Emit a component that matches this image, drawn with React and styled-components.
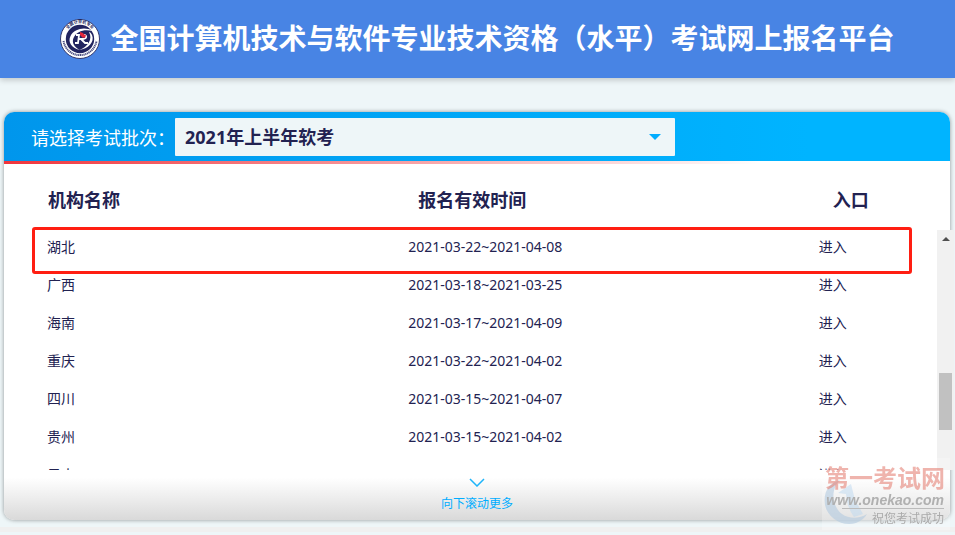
import React, { useState } from "react";
import styled, { createGlobalStyle } from "styled-components";

const GlobalStyle = createGlobalStyle`
  * {
    box-sizing: border-box;
  }
  body {
    margin: 0;
    background-color: #eef6f8;
    color: #222251;
    font-family: "Noto Sans", "Noto Sans CJK SC", sans-serif;
    overflow: hidden;
  }
`;

const Header = styled.header`
  display: flex;
  align-items: center;
  justify-content: center;
  gap: 10px;
  height: 78px;
  background-color: #4884e4;
  box-shadow: 0 2px 6px rgba(0, 0, 0, 0.2);
`;

const Title = styled.h1`
  margin: 0;
  padding-bottom: 4px;
  font-size: 28px;
  line-height: 40px;
  font-weight: bold;
  color: #fff;
  white-space: nowrap;
  font-family: "Noto Sans CJK SC", sans-serif;
`;

const Card = styled.main`
  margin: 34px 5px 0 4px;
  border-radius: 10px;
  background-color: #fff;
  box-shadow: 0 0 4px rgba(0, 0, 0, 0.4);
`;

const BatchBar = styled.div`
  display: flex;
  align-items: center;
  height: 49px;
  padding-left: 27px;
  border-radius: 10px 10px 0 0;
  background: linear-gradient(90deg, #0096ec, #00b4ff 85%);
`;

const BatchLabel = styled.label`
  font-size: 18px;
  color: #fff;
  line-height: 38px;
  padding-top: 2px;
`;

const SelectBox = styled.div`
  display: flex;
  align-items: center;
  flex: 0 1 500px;
  padding-right: 14px;
  border-radius: 1px;
  background-color: #eef6f8;
`;

const BatchSelect = styled.select`
  flex: 1;
  height: 38px;
  padding: 0 10px;
  border: none;
  outline: none;
  appearance: none;
  background: transparent;
  color: #222251;
  font-family: inherit;
  font-size: 18px;
  font-weight: bold;
`;

const Caret = styled.span`
  border: 6px solid transparent;
  border-top-color: #00adff;
  border-bottom: none;
`;

const RedLine = styled.div`
  height: 3px;
  background: linear-gradient(90deg, #f0353c, #fff 80%);
`;

const Table = styled.table`
  width: 100%;
  table-layout: fixed;
  border-collapse: collapse;
`;

const HeadCell = styled.th`
  width: ${(props) => props.$width};
  height: 64px;
  padding: ${(props) => (props.$first ? "8px 0 0 44px" : "8px 0 0")};
  text-align: ${(props) => (props.$first ? "left" : "center")};
  font-size: 18px;
  line-height: 24px;
  font-weight: bold;
  white-space: nowrap;
`;

const ListArea = styled.div`
  position: relative;
  display: flex;
  height: 242px;
  margin-right: -4px;
`;

const ListView = styled.div`
  flex: 1;
  height: 100%;
  overflow: hidden;
`;

const Cell = styled.td`
  width: ${(props) => props.$width};
  height: 38px;
  padding: ${(props) => (props.$first ? "0 0 0 43px" : "0 0 0 3px")};
  font-size: 14px;
  line-height: 20px;
`;

const EnterLink = styled.a`
  color: inherit;
  text-decoration: none;
`;

const RowMark = styled.div`
  position: absolute;
  top: -1px;
  left: 28px;
  right: 42px;
  height: 47px;
  border: 3px solid #ff1e12;
  border-radius: 3px;
  pointer-events: none;
`;

const Track = styled.div`
  display: flex;
  flex-direction: column;
  align-items: center;
  width: 17px;
  margin-top: 2px;
  background-color: #f1f1f1;
`;

const TrackArrow = styled.span`
  margin-top: 7px;
  border: 4px solid transparent;
  border-bottom-color: #505050;
  border-top: none;
`;

const Thumb = styled.span`
  width: 13px;
  height: 57px;
  margin-top: 132px;
  background-color: #c1c1c1;
`;

const MoreButton = styled.button`
  display: flex;
  flex-direction: column;
  align-items: center;
  gap: 8px;
  width: 100%;
  height: 50px;
  padding: 8px 0 0;
  border: none;
  border-radius: 0 0 10px 10px;
  background: linear-gradient(180deg, #fff 15%, #f0f0f0 50%, #d9d9d9);
  color: #00adff;
  font-family: inherit;
  font-size: 12px;
  line-height: 18px;
`;

const BottomLine = styled.div`
  height: 5px;
  margin-top: 7px;
  background-color: #f0f0f0;
`;

const Watermark = styled.aside`
  position: fixed;
  right: 5px;
  bottom: 5px;
  display: flex;
  flex-direction: column;
  align-items: flex-end;
  width: 128px;
  height: 72px;
  padding: 6px 6px 0 0;
  background-color: rgba(255, 255, 255, 0.25);
  white-space: nowrap;
  pointer-events: none;
`;

const WatermarkSwirl = styled.svg`
  position: absolute;
  left: 0;
  bottom: 2px;
`;

const SiteName = styled.span`
  position: relative;
  margin-right: -1px;
  font-size: 24px;
  line-height: 28px;
  font-weight: bold;
  color: rgba(228, 130, 118, 0.6);
`;

const SiteUrl = styled.span`
  position: relative;
  font-family: "Liberation Sans", sans-serif;
  font-size: 14px;
  line-height: 16px;
  font-style: italic;
  font-weight: bold;
  color: #b0b0b0;
`;

const SiteSlogan = styled.span`
  position: relative;
  padding: 1px 0 0 30px;
  border-top: 1px solid #bbb;
  font-size: 12px;
  line-height: 18px;
  color: #aaa;
`;

const regions = [
  { name: "湖北", time: "2021-03-22~2021-04-08" },
  { name: "广西", time: "2021-03-18~2021-03-25" },
  { name: "海南", time: "2021-03-17~2021-04-09" },
  { name: "重庆", time: "2021-03-22~2021-04-02" },
  { name: "四川", time: "2021-03-15~2021-04-07" },
  { name: "贵州", time: "2021-03-15~2021-04-02" },
  { name: "云南", time: "" },
];

function Logo() {
  return (
    <svg width="40" height="40" viewBox="0 0 40 40" aria-hidden="true">
      <defs>
        <path id="topArc" d="M5.5 23a15 15 0 1 1 29 0" />
      </defs>
      <circle cx="20" cy="20" r="19.5" fill="#fff" stroke="#34386c" />
      <text fontSize="4" fontWeight="bold" fill="#22245a">
        <textPath href="#topArc" startOffset="50%" textAnchor="middle">
          全国计算机专业
        </textPath>
      </text>
      <path
        d="M3.5 22a16.7 16.7 0 0 0 33 0"
        fill="none"
        stroke="#4a4d80"
        strokeWidth="2"
        strokeDasharray="1.2 0.6"
      />
      <circle cx="20" cy="20" r="14.2" fill="#22245f" />
      <path
        d="M32.500 12C25 7 14 10 10.500 17c-3 6 1 12 9 14-5-3-8-7-6-12 3-7 11-9 19-7z"
        fill="#fff"
      />
      <path
        d="M29 13c4 7-1 15-10 18 9-1 16-8 13-15-1-2-2-3-3-3z"
        fill="#fff"
      />
      <path
        d="M16 16h3l-1 8h-3M19 20h4c4 0 4-4 1-4M21 20l4 4h3"
        fill="none"
        stroke="#fff"
        strokeWidth="1.8"
      />
      <path d="M20 13l3 1 2 3-2 2-3-3zM23 15l3 1-1 3-2-1z" fill="#e5273b" />
    </svg>
  );
}

function App() {
  const [batch, setBatch] = useState("2021-1");

  const handleBatch = (event) => {
    setBatch(event.target.value);
  };

  return (
    <>
      <GlobalStyle />
      <Header>
        <Logo />
        <Title>全国计算机技术与软件专业技术资格（水平）考试网上报名平台</Title>
      </Header>
      <Card>
        <BatchBar>
          <BatchLabel htmlFor="batch">请选择考试批次：</BatchLabel>
          <SelectBox>
            <BatchSelect id="batch" value={batch} onChange={handleBatch}>
              <option value="2021-1">2021年上半年软考</option>
            </BatchSelect>
            <Caret />
          </SelectBox>
        </BatchBar>
        <RedLine />
        <Table>
          <thead>
            <tr>
              <HeadCell $first $width="20%">机构名称</HeadCell>
              <HeadCell $width="59%">报名有效时间</HeadCell>
              <HeadCell $width="21%">入口</HeadCell>
            </tr>
          </thead>
        </Table>
        <ListArea>
          <ListView>
            <Table>
              <tbody>
                {regions.map((region) => (
                  <tr key={region.name}>
                    <Cell $first $width="43%">{region.name}</Cell>
                    <Cell $width="44%">{region.time}</Cell>
                    <Cell $width="13%">
                      <EnterLink href="#enter">进入</EnterLink>
                    </Cell>
                  </tr>
                ))}
              </tbody>
            </Table>
          </ListView>
          <Track aria-hidden="true">
            <TrackArrow />
            <Thumb />
          </Track>
          <RowMark />
        </ListArea>
        <MoreButton type="button">
          <svg width="16" height="9" viewBox="0 0 16 9" aria-hidden="true">
            <path
              d="M1 1l7 7 7-7"
              fill="none"
              stroke="#1db4fa"
              strokeWidth="1.5"
            />
          </svg>
          向下滚动更多
        </MoreButton>
      </Card>
      <BottomLine />
      <Watermark>
        <WatermarkSwirl width="50" height="54" viewBox="0 0 50 54">
          <path
            d="M18 6C6 9 1 19 3 31c3 14 18 22 31 18 5-2 9-5 11-9-8 5-18 5-25 0C10 32 8 16 18 6z"
            fill="#b3c9e0"
            fillOpacity="0.6"
          />
          <path
            d="M16 19l13-9 4 16 8 14-9 3c-5-7-7-14-8-23z"
            fill="#bcd8f0"
            fillOpacity="0.5"
          />
        </WatermarkSwirl>
        <SiteName>第一考试网</SiteName>
        <SiteUrl>www.onekao.com</SiteUrl>
        <SiteSlogan>祝您考试成功</SiteSlogan>
      </Watermark>
    </>
  );
}

export default App;
